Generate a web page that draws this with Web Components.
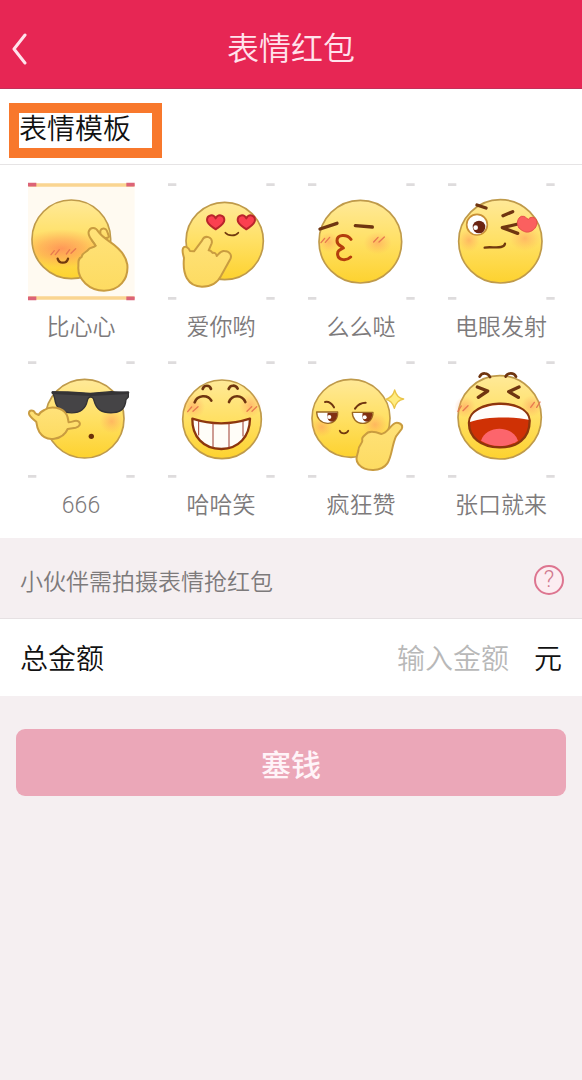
<!DOCTYPE html>
<html lang="zh-CN">
<head>
<meta charset="utf-8">
<meta name="viewport" content="width=device-width, initial-scale=1">
<title>表情红包</title>
<style>
    html {
        --primary-color: #e72654;
        --page-color: #f5eff1;
        --muted-color: #7d7a7b;
        --gutter: 20px;
        background-color: var(--page-color);
    }
    body {
        margin: 0;
        color: #111;
        font-family: Roboto, "Noto Sans CJK SC", sans-serif;
        font-size: 28px;
        font-weight: 350;
    }
</style>
</head>
<body>
<red-packet-page></red-packet-page>

<script>
// Shared colours of the faces
const defs = `
    <defs>
        <linearGradient id="face" x1="0" y1="0" x2="0" y2="1">
            <stop offset="0" stop-color="#ffe998"/>
            <stop offset="0.5" stop-color="#ffe064"/>
            <stop offset="1" stop-color="#fdd22f"/>
        </linearGradient>
        <linearGradient id="hand" x1="0" y1="0" x2="0" y2="1">
            <stop offset="0" stop-color="#ffe27a"/>
            <stop offset="1" stop-color="#fddb61"/>
        </linearGradient>
        <radialGradient id="blush">
            <stop offset="0" stop-color="#ff9060" stop-opacity="0.5"/>
            <stop offset="1" stop-color="#ffa060" stop-opacity="0"/>
        </radialGradient>
        <radialGradient id="flush">
            <stop offset="0" stop-color="#ff8058" stop-opacity="0.75"/>
            <stop offset="0.5" stop-color="#ff8c58" stop-opacity="0.45"/>
            <stop offset="1" stop-color="#ff9a58" stop-opacity="0"/>
        </radialGradient>
    </defs>
`;

const face = (x, y, r) => `<circle class="skin" cx="${x}" cy="${y}" r="${r}"/>`;
const blush = (x, y, rx, ry) => `<ellipse cx="${x}" cy="${y}" rx="${rx}" ry="${ry}" fill="url(#blush)"/>`;
const heart = 'M0 22C-11 14 -26 7 -26 -6C-26 -22 -7 -25 0 -11C7 -25 26 -22 26 -6C26 7 11 14 0 22Z';

const drawings = {
    heart: `
        ${face(169, 208, 118)}
        <clipPath id="cheeks"><circle cx="169" cy="208" r="116"/></clipPath>
        <ellipse clip-path="url(#cheeks)" fill="url(#flush)" cx="140" cy="236" rx="130" ry="58"/>
        <path class="tick" d="M108 254l10-12M121 254l12-15M154 252l10-13M168 250l14-14"/>
        <path class="line" d="M128 266c4 16 27 16 31 0"/>
        <path class="hand" d="M256 182c4-10 17-8 20 1l6 17c-6 8-18 3-26-2z"/>
        <path class="hand" d="M250 185c8 12 20 20 34 30c25 17 49 39 53 69c4 44-24 78-70 78c-43 0-80-34-77-72c1-13-3-24 10-29c1-13 14-14 20-22c3-8 17-5 22-12c-9-15-25-28-21-42c5-16 22-13 29 0z"/>
        <path class="seam" d="M242 227l-12-16"/>
    `,
    love: `
        ${face(209, 213, 116)}
        <path class="love" transform="translate(182 156)" d="${heart}"/>
        <path class="love" transform="translate(274 156)" d="${heart}"/>
        <path class="line thin" d="M211 188c9 11 31 11 39 0"/>
        <path class="hand" d="M87 264c-2-10-7-19-3-29c5-9 17-3 21 8l12 1l24-32c8-19 34-12 29 8l-9 21c7 0 8 3 12 8c5-2 11 1 12 9c8-8 13-17 23-15c15 0 24 12 18 24l-27 49c-13 26-34 34-58 34c-44-1-59-38-54-86z"/>
    `,
    kiss: `
        ${face(196, 215, 124)}
        ${blush(102, 217, 32, 30)}
        ${blush(248, 219, 42, 34)}
        <path class="tick" d="M78 218l11-13M91 217l13-15M236 216l13-14M252 216l16-15"/>
        <path class="brow" d="M75 177l51-17M181 167l51 4"/>
        <path class="lips" d="M168 208c-13-17-42-15-42 4c0 16 15 15 19 22c-10 5-19 8-17 21c3 17 27 18 39 6"/>
    `,
    wink: `
        ${face(196, 214, 125)}
        ${blush(102, 211, 32, 34)}
        ${blush(270, 205, 46, 38)}
        <circle cx="126" cy="164" r="31" fill="#fff" stroke="#c99036" stroke-width="5"/>
        <circle cx="132" cy="171" r="19" fill="#6b2413"/>
        <circle cx="122" cy="173" r="7" fill="#fff"/>
        <path class="brow" d="M126 105l27 9M204 137l29-12"/>
        <path class="brow" d="M249 162l-47 11l46 17"/>
        <path fill="#fb605f" stroke="#e64d48" stroke-width="3" d="M252 174c-10-14-3-31 7-35c12-2 14 6 21 9c10-13 27-3 26 10c-1 12-8 24-25 28c-11 2-22-5-29-12z"/>
        <path class="line" d="M149 233c18-4 32 2 49-2c8-2 11-5 12-10"/>
    `,
    cool: `
        ${face(209, 206, 118)}
        ${blush(290, 214, 36, 36)}
        <path fill="#454446" stroke="#343335" stroke-width="4" stroke-linejoin="round" d="M113 126l45 0l68 4l62-5l52 3v13l-7 8c-2 23-11 38-38 39c-37 2-51-10-58-36c-2-14-17-15-20 0c-6 29-24 39-56 36c-28-2-39-20-42-42z"/>
        <path stroke="#343335" stroke-width="8" fill="none" d="M113 128l114 6l112-6"/>
        <path class="hand" d="M88 180c19-14 54-8 67 14c5 9 4 18 6 23c9 0 20-8 29-3c10 8 2 17-8 19l-24 4c-14 32-64 43-85 9c-7-12-8-22-9-30c-8-8-21-15-22-25c-1-13 14-12 19-1l10 5c3-7 9-11 17-15z"/>
        <circle cx="229" cy="259" r="8" fill="#6b3109"/>
    `,
    grin: `
        ${face(201, 208, 118)}
        ${blush(116, 170, 34, 35)}
        ${blush(286, 166, 34, 36)}
        <path class="tick" d="M98 185l12-14M114 184l15-14M276 184l14-14M291 184l14-14"/>
        <path class="brow soft" d="M119 157c8-23 40-24 50-5M222 156c9-23 39-23 49 0M143 117c4-13 21-13 25 0M221 117c4-13 21-13 27-1"/>
        <path class="mouth" fill="#fffdf8" d="M112 206c56 18 117 18 173 0c-1 54-34 90-86 91c-55-1-88-38-87-91z"/>
        <path class="teeth" d="M131 214v41M174 220v72M222 219v74M264 213v45"/>
    `,
    praise: `
        ${face(168, 205, 117)}
        ${blush(80, 231, 32, 30)}
        ${blush(240, 224, 38, 36)}
        <path class="brow narrow" d="M90 156c10-2 19 3 27 16M180 176c8-12 18-18 32-18"/>
        <path fill="#fff" stroke="#9c6a22" stroke-width="4" d="M65 186h63c1 22-12 35-31 34c-20-1-32-15-32-34zM172 187h62c0 21-13 33-30 33c-20 0-32-14-32-33z"/>
        <path fill="#813112" d="M98 188h28c2 17-6 26-15 27c-12 0-16-12-13-27zM203 189h28c2 16-6 26-15 26c-12 0-16-12-13-26z"/>
        <circle cx="103" cy="201" r="6" fill="#fff"/>
        <circle cx="209" cy="202" r="6" fill="#fff"/>
        <path class="line thin" d="M134 242c5 12 22 10 26 0"/>
        <path class="hand" d="M211 254c11-16 33-8 48-2c16-2 24-20 37-30c10-9 31 0 24 15l-17 22c-13 28-12 61-26 81c-18 26-66 26-86 3c-12-14-4-27-1-41c-1-16 13-20 12-31c-3-8 4-13 9-17z"/>
        <path fill="#ffec80" stroke="#eac448" stroke-width="4" stroke-linejoin="round" d="M299 120q7 25 27 27q-22 4-28 28q-6-23-26-27q22-6 27-28z"/>
    `,
    laugh: `
        ${face(194, 202, 125)}
        ${blush(90, 171, 32, 32)}
        ${blush(290, 168, 32, 32)}
        <path class="tick" d="M69 184l10-16M84 182l15-15M287 172l11-15M305 172l10-16"/>
        <path class="brow soft" d="M134 80c6-13 25-13 31 1M212 80c6-13 25-13 31 0"/>
        <path class="brow" d="M127 111l31 12l-28 19M252 111l-31 14l29 17"/>
        <path class="mouth" fill="#cf3105" d="M102 218c3-73 176-77 182-6c0 54-38 81-91 80c-56-1-92-30-91-74z"/>
        <path fill="#fffdfa" d="M105 216c4-64 170-69 176-7c-48-10-130-10-176 7z"/>
        <path fill="#fc656c" d="M138 272c14-46 93-50 111 0c-31 21-78 22-111 0z"/>
    `
};

class SiteHeader extends HTMLElement {
    constructor() {
        super();
        this.attachShadow({ mode: 'open' });
        this.shadowRoot.innerHTML = `
            <style>
                :host { display: block; }
                header {
                    background-color: var(--primary-color);
                    color: #ffe3ec;
                    display: grid;
                    grid-template-columns: 44px 1fr 44px;
                    align-items: center;
                    height: 89px;
                    padding-top: 10px;
                    box-sizing: border-box;
                    border-bottom: 1px solid #c4305a;
                }
                a { color: inherit; display: flex; padding-left: 10px; }
                h1 { margin: 0; font-size: 32px; line-height: 44px; font-weight: inherit; text-align: center; }
                svg { width: 20px; height: 32px; fill: none; stroke: currentColor; stroke-width: 3; stroke-linecap: round; stroke-linejoin: round; }
            </style>
            <header>
                <a href="#" aria-label="返回"><svg viewBox="0 0 20 32"><path d="M15 2L4 16l11 14"/></svg></a>
                <h1><slot></slot></h1>
            </header>
        `;
    }
}

class SectionTitle extends HTMLElement {
    constructor() {
        super();
        this.attachShadow({ mode: 'open' });
        this.shadowRoot.innerHTML = `
            <style>
                :host {
                    display: flex;
                    padding: 14px 9px 6px;
                    background-color: #fff;
                    border-bottom: 1px solid #e6e4e5;
                }
                h2 {
                    margin: 0;
                    padding: 0 21px 2px 0;
                    border: 10px solid #f8782c;
                    font-size: 28px;
                    line-height: 33px;
                    font-weight: inherit;
                }
            </style>
            <h2><slot></slot></h2>
        `;
    }
}

class EmojiTemplate extends HTMLElement {
    constructor() {
        super();
        this.attachShadow({ mode: 'open' });
    }

    connectedCallback() {
        const row = Number(this.getAttribute('row'));
        const top = row === 1 ? 36 : 30;
        const selected = this.hasAttribute('selected');
        this.shadowRoot.innerHTML = `
            <style>
                :host { display: block; }
                button {
                    width: 100%;
                    padding: 0;
                    border: 0;
                    background: none;
                    color: var(--muted-color);
                    font: inherit;
                    display: flex;
                    flex-direction: column;
                    align-items: center;
                    gap: 12px;
                }
                span { font-size: 23px; line-height: 32px; }
                svg { width: 108px; height: 118px; overflow: visible; }
                path { stroke-linecap: round; stroke-linejoin: round; }
                .corner { stroke: #dedcdd; stroke-width: 8; stroke-linecap: butt; }
                .skin { fill: url(#face); stroke: #bf9a4a; stroke-width: 5; }
                .hand { fill: url(#hand); stroke: #c99c40; stroke-width: 6; }
                .seam { fill: none; stroke: #c99c40; stroke-width: 5; }
                .line { fill: none; stroke: #71390e; stroke-width: 7; }
                .thin { stroke-width: 5; }
                .brow { fill: none; stroke: #6f3510; stroke-width: 10; }
                .soft { stroke-width: 8; }
                .narrow { stroke-width: 6; }
                .tick { fill: none; stroke: #e7794f; stroke-width: 4; }
                .lips { fill: none; stroke: #b43e0d; stroke-width: 9; }
                .love { fill: #fb3f50; stroke: #b9252b; stroke-width: 6; }
                .mouth { stroke: #8c360d; stroke-width: 7; }
                .teeth { fill: none; stroke: #9d3b2f; stroke-width: 3; }
            </style>
            <button type="button" aria-pressed="${selected}">
                <svg viewBox="36 ${top} 324 354" aria-hidden="true">
                    ${defs}
                    ${selected ? `
                        <path fill="#fffaf1" d="M39 44h320v341H39z"/>
                        <path stroke="#fad591" stroke-width="11" d="M44 45h310M44 384h310"/>
                    ` : ''}
                    <path class="corner" ${selected ? 'style="stroke:#dc6377;stroke-width:11"' : ''}
                        d="M39 ${top + 8}h25M334 ${top + 8}h25M39 ${top + 349}h25M334 ${top + 349}h25"/>
                    ${drawings[this.getAttribute('face')]}
                </svg>
                <span><slot></slot></span>
            </button>
        `;
    }
}

class TemplateGrid extends HTMLElement {
    constructor() {
        super();
        this.attachShadow({ mode: 'open' });
        this.shadowRoot.innerHTML = `
            <style>
                :host {
                    display: grid;
                    grid-template-columns: repeat(4, 1fr);
                    row-gap: 16px;
                    padding: 17px 11px 16px;
                    background-color: #fff;
                }
            </style>
            <slot></slot>
        `;
    }
}

class HintBar extends HTMLElement {
    constructor() {
        super();
        this.attachShadow({ mode: 'open' });
        this.shadowRoot.innerHTML = `
            <style>
                :host {
                    display: flex;
                    justify-content: space-between;
                    align-items: center;
                    height: 81px;
                    padding: 4px 18px 0 var(--gutter);
                    box-sizing: border-box;
                    border-bottom: 1px solid #e6e1e3;
                    color: var(--muted-color);
                    font-size: 23px;
                }
                p { margin: 0; }
                button {
                    width: 30px;
                    height: 30px;
                    padding: 0;
                    border: 2px solid #dd7590;
                    border-radius: 50%;
                    background: #fcedf1;
                    color: #d0788e;
                    font: inherit;
                    font-size: 23px;
                    line-height: 26px;
                }
            </style>
            <p><slot></slot></p>
            <button type="button">?</button>
        `;
    }
}

class AmountField extends HTMLElement {
    constructor() {
        super();
        this.attachShadow({ mode: 'open' });
        this.shadowRoot.innerHTML = `
            <style>
                :host {
                    display: flex;
                    align-items: baseline;
                    padding: 21px var(--gutter) 16px;
                    background-color: #fff;
                    line-height: 40px;
                }
                input {
                    flex: 1;
                    min-width: 0;
                    height: 40px;
                    margin-right: 25px;
                    padding: 0;
                    border: 0;
                    background: none;
                    color: inherit;
                    font: inherit;
                    text-align: right;
                }
                input::placeholder { color: #b8b8b8; }
            </style>
            <label for="amount"><slot></slot></label>
            <input id="amount" inputmode="decimal" placeholder="输入金额">
            <span>元</span>
        `;
    }
}

class SubmitButton extends HTMLElement {
    constructor() {
        super();
        this.attachShadow({ mode: 'open' });
        this.shadowRoot.innerHTML = `
            <style>
                :host { display: block; padding: 33px 16px; }
                button {
                    width: 100%;
                    height: 67px;
                    padding: 0;
                    border: 0;
                    border-radius: 9px;
                    background-color: #eba7b8;
                    color: #fff4f8;
                    font: inherit;
                    font-size: 30px;
                    font-weight: 500;
                }
            </style>
            <button type="button"><slot></slot></button>
        `;
    }
}

class RedPacketPage extends HTMLElement {
    constructor() {
        super();
        this.attachShadow({ mode: 'open' });
        this.shadowRoot.innerHTML = `
            <style>
                :host { display: block; }
            </style>
            <site-header>表情红包</site-header>
            <main>
                <section-title>表情模板</section-title>
                <template-grid>
                    <emoji-template row="1" face="heart" selected>比心心</emoji-template>
                    <emoji-template row="1" face="love">爱你哟</emoji-template>
                    <emoji-template row="1" face="kiss">么么哒</emoji-template>
                    <emoji-template row="1" face="wink">电眼发射</emoji-template>
                    <emoji-template row="2" face="cool">666</emoji-template>
                    <emoji-template row="2" face="grin">哈哈笑</emoji-template>
                    <emoji-template row="2" face="praise">疯狂赞</emoji-template>
                    <emoji-template row="2" face="laugh">张口就来</emoji-template>
                </template-grid>
                <hint-bar>小伙伴需拍摄表情抢红包</hint-bar>
                <amount-field>总金额</amount-field>
                <submit-button>塞钱</submit-button>
            </main>
        `;
    }
}

customElements.define('site-header', SiteHeader);
customElements.define('section-title', SectionTitle);
customElements.define('emoji-template', EmojiTemplate);
customElements.define('template-grid', TemplateGrid);
customElements.define('hint-bar', HintBar);
customElements.define('amount-field', AmountField);
customElements.define('submit-button', SubmitButton);
customElements.define('red-packet-page', RedPacketPage);
</script>
</body>
</html>
